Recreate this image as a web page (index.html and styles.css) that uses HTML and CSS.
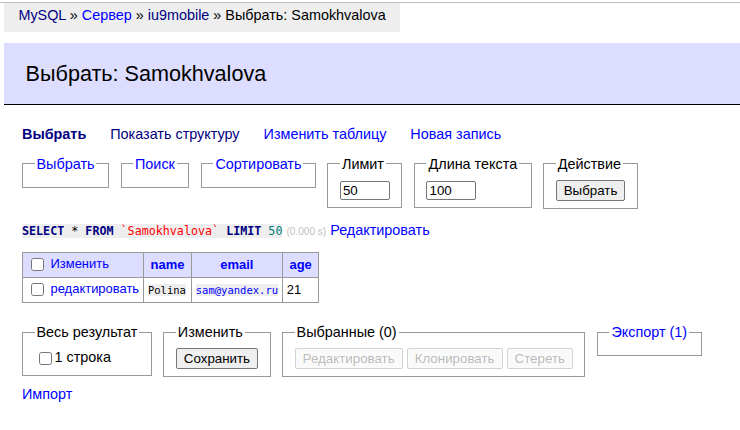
FILE: index.html
```html
<!DOCTYPE html>
<html lang="ru">
<head>
<meta charset="utf-8">
<title>Выбрать: Samokhvalova</title>
<link rel="stylesheet" href="styles.css">
</head>
<body>
<div class="topline"></div>
<div class="breadcrumb"><a class="v" href="#">MySQL</a> » <a href="#">Сервер</a> » <a class="v" href="#">iu9mobile</a> » Выбрать: Samokhvalova</div>
<div class="content">
  <h2>Выбрать: Samokhvalova</h2>
  <p class="links"><a class="v active" href="#">Выбрать</a> <a class="v" href="#">Показать структуру</a> <a href="#">Изменить таблицу</a> <a href="#">Новая запись</a></p>
  <form class="filters">
    <fieldset><legend><a href="#">Выбрать</a></legend></fieldset>
    <fieldset><legend><a href="#">Поиск</a></legend></fieldset>
    <fieldset><legend><a href="#">Сортировать</a></legend></fieldset>
    <fieldset><legend>Лимит</legend><input class="size" type="text" value="50"></fieldset>
    <fieldset><legend>Длина текста</legend><input class="size" type="text" value="100"></fieldset>
    <fieldset><legend>Действие</legend><button type="button" class="btn">Выбрать</button></fieldset>
  </form>
  <p class="sql"><code class="jush"><a class="kw" href="#">SELECT</a> * <a class="kw" href="#">FROM</a> <span class="bac">`Samokhvalova`</span> <a class="kw" href="#">LIMIT</a> <span class="num">50</span></code> <span class="time">(0.000 s)</span> <a href="#">Редактировать</a></p>
  <table class="data">
    <thead>
      <tr>
        <td><input type="checkbox"> <a href="#">Изменить</a></td>
        <th><a href="#">name</a></th>
        <th><a href="#">email</a></th>
        <th><a href="#">age</a></th>
      </tr>
    </thead>
    <tbody>
      <tr>
        <td><input type="checkbox"> <a href="#">редактировать</a></td>
        <td><code>Polina</code></td>
        <td><a href="#"><code>sam@yandex.ru</code></a></td>
        <td>21</td>
      </tr>
    </tbody>
  </table>
  <div class="footer"><div class="footer-in">
    <fieldset><legend>Весь результат</legend><label><input type="checkbox">1 строка</label></fieldset>
    <fieldset><legend>Изменить</legend><button type="button" class="btn">Сохранить</button></fieldset>
    <fieldset><legend>Выбранные (0)</legend><button type="button" class="btn" disabled>Редактировать</button> <button type="button" class="btn" disabled>Клонировать</button> <button type="button" class="btn" disabled>Стереть</button></fieldset>
    <fieldset><legend><a href="#">Экспорт (1)</a></legend></fieldset>
  </div></div>
  <div class="import"><a href="#">Импорт</a></div>
</div>
</body>
</html>
```
FILE: styles.css
```css
body {
  margin: 0;
  color: #000;
  background: #fff;
  font: 14.4px/1.25 "Liberation Sans", Arial, sans-serif;
}
a { color: #00f; text-decoration: none; }
a.v { color: #000080; }
.active { font-weight: bold; }

.topline {
  height: 2px;
  border-bottom: 1px solid #bdbdbd;
}
.breadcrumb {
  width: fit-content;
  margin-left: 4px;
  height: 28.8px;
  line-height: 25.9px;
  padding: 0 14.4px;
  background: #eee;
  white-space: nowrap;
}
.content {
  padding-left: 22px;
  margin-top: 11px;
}
h2 {
  font-size: 21.6px;
  line-height: 27px;
  font-weight: normal;
  margin: 0 0 20px -18px;
  padding: 17.28px 21.6px;
  border-bottom: 1px solid #000;
  background: #ddf;
  color: #000;
}
p { margin: 11.52px 20px 0 0; }
.links a { white-space: nowrap; margin-right: 20px; }
form { margin: 0; }
fieldset {
  display: inline-block;
  vertical-align: top;
  padding: 7.2px 11.52px;
  margin: 11.52px 7.5px 0 0;
  border: 1px solid #999;
  min-inline-size: 0;
}
legend { padding: 0 2px; }
input, button { vertical-align: middle; }
input.size {
  width: 44px;
  font: 13.33px "Liberation Sans", Arial, sans-serif;
  padding: 1px 2px;
  border: 1px solid #767676;
  border-radius: 2px;
  height: 15px;
  margin: 0;
}
.btn {
  font: 13.33px "Liberation Sans", Arial, sans-serif;
  padding: 1px 7px;
  height: 21px;
  border: 1px solid #767676;
  border-radius: 2px;
  background: #efefef;
  color: #000;
  margin: 0;
}
.btn:disabled {
  background: rgba(239, 239, 239, 0.3);
  border-color: rgba(118, 118, 118, 0.3);
  color: rgba(16, 16, 16, 0.3);
}
code {
  font-family: "DejaVu Sans Mono", "Liberation Mono", monospace;
  font-size: 0.8125em;
  background: #eee;
}
.jush .kw { color: #000080; font-weight: bold; }
.jush .bac { color: red; }
.jush .num { color: #007f7f; }
.time { color: silver; font-size: 70%; }

table.data {
  margin: 12.96px 20px 0 0;
  border-collapse: collapse;
  font-size: 90%;
}
.data td, .data th {
  border: 1px solid #999;
  padding: 2.6px 3.9px;
}
.data th { text-align: left; }
.data thead th { text-align: center; padding: 2.6px 6.5px; }
.data thead td, .data thead th { background: #ddf; }
.data input[type=checkbox] { margin: 3px 3px 3px 4px; }

.footer { padding-top: 20px; }
.footer-in { padding-bottom: 7.2px; }
.footer fieldset { margin-top: 0; }
label input[type=checkbox] { margin: 3px 3px 3px 4px; }
```
